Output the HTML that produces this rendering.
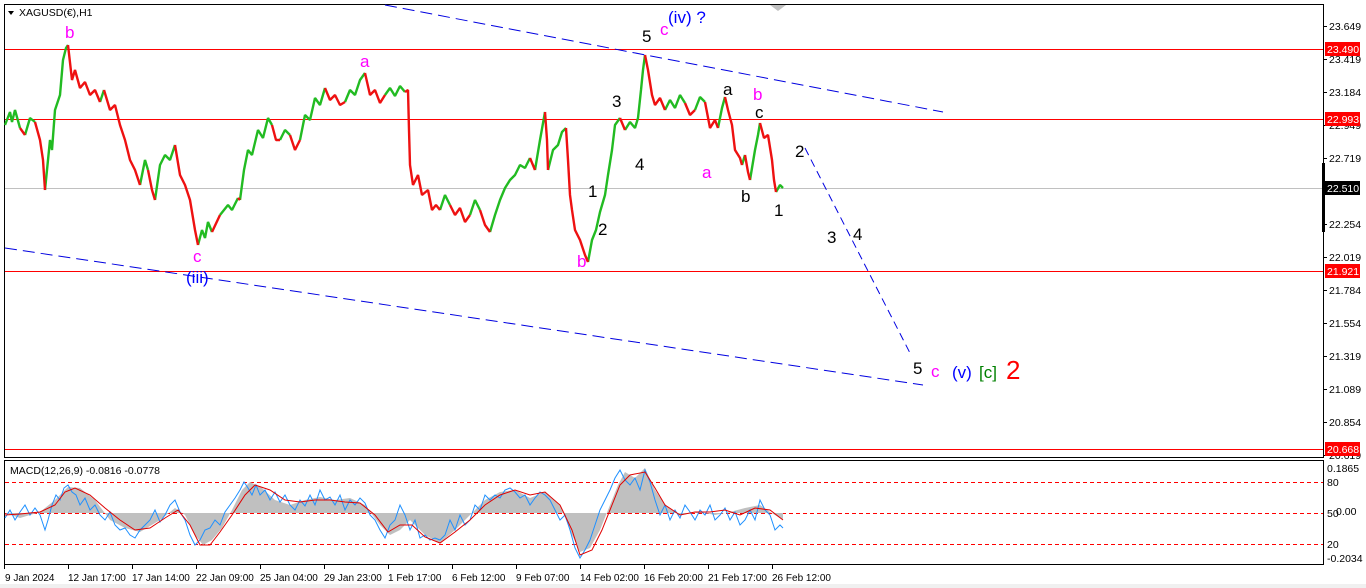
<!DOCTYPE html>
<html><head><meta charset="utf-8"><style>
html,body{margin:0;padding:0;background:#fff;width:1366px;height:588px;overflow:hidden}
svg{display:block}
.ax{font:10.5px "Liberation Sans",sans-serif;fill:#000}
.tx{font:10px "Liberation Sans",sans-serif;fill:#000}
.w{fill:#fff}
.lb{font:17px "Liberation Sans",sans-serif}
</style></head><body>
<svg width="1366" height="588" xmlns="http://www.w3.org/2000/svg">
<rect x="0" y="0" width="1366" height="588" fill="#fff"/>
<rect x="4.5" y="4.5" width="1319" height="453" fill="none" stroke="#000"/>
<rect x="4.5" y="460.5" width="1319" height="104" fill="none" stroke="#000"/>
<rect x="0" y="584" width="1366" height="4" fill="#f0f0f0"/>
<line x1="5" y1="49.5" x2="1323" y2="49.5" stroke="#ff0000"/>
<line x1="5" y1="119.5" x2="1323" y2="119.5" stroke="#ff0000"/>
<line x1="5" y1="188.5" x2="1323" y2="188.5" stroke="#c0c0c0"/>
<line x1="5" y1="271.5" x2="1323" y2="271.5" stroke="#ff0000"/>
<line x1="5" y1="449.5" x2="1323" y2="449.5" stroke="#ff0000"/>
<line x1="5" y1="482.5" x2="1323" y2="482.5" stroke="#ff0000" stroke-dasharray="4,3"/>
<line x1="5" y1="513.5" x2="1323" y2="513.5" stroke="#ff0000" stroke-dasharray="4,3"/>
<line x1="5" y1="544.5" x2="1323" y2="544.5" stroke="#ff0000" stroke-dasharray="4,3"/>

<g fill="none" stroke-width="2.4" stroke-linejoin="bevel">
<path stroke="#22bb22" d="M5,125 L10,112 12,122 15,110 20,128 M25,135 L30,118 35,122 M45,190 L48,160 50,140 52,150 55,110 60,95 63,60 66,48 68,45 M100,102 L104,90 M140,185 L145,160 148,170 M155,200 L160,165 165,155 170,160 175,145 M198,245 L202,230 205,238 208,222 212,232 M220,215 L228,205 232,210 238,198 M240,200 L244,170 248,150 252,155 258,130 263,138 268,118 272,125 M280,140 L285,130 290,135 M300,140 L305,115 310,120 315,98 320,105 325,88 M345,102 L350,90 355,95 360,80 365,73 M385,95 L390,88 395,96 400,86 405,92 M440,210 L445,195 450,205 M470,215 L475,200 480,210 M490,232 L495,215 500,200 505,188 510,180 515,175 520,165 525,168 530,158 M535,170 L540,140 545,112 M548,170 L553,150 558,145 562,132 566,128 M588,262 L592,240 596,230 600,212 605,195 608,175 612,150 615,125 620,118 M625,130 L630,122 635,128 638,118 641,90 643,70 645,55 M665,110 L670,100 675,108 680,95 685,103 M695,110 L700,97 705,102 M718,128 L722,108 725,97 M742,165 L745,155 M750,180 L755,150 758,135 760,123 M776,192 L780,185 783,188"/>
<path stroke="#ee1111" d="M20,128 L25,135 M35,122 L40,140 43,160 45,190 M68,45 L72,80 75,70 80,88 85,82 90,95 95,90 100,102 M104,90 L110,110 115,105 120,125 125,140 130,160 135,170 140,185 M148,170 L152,190 155,200 M175,145 L180,175 185,185 190,200 195,230 198,245 M212,232 L220,215 M238,198 L240,200 M272,125 L276,140 280,140 M290,135 L295,150 300,140 M325,88 L330,100 335,95 340,105 345,102 M365,73 L370,95 375,90 380,103 385,95 M405,92 L408,90 409,130 410,165 413,185 418,175 422,195 428,190 432,210 436,205 440,210 M450,205 L455,215 460,208 465,222 470,215 M480,210 L485,225 490,232 M530,158 L535,170 M545,112 L547,140 548,170 M566,128 L568,160 570,195 572,210 575,230 580,240 585,255 588,262 M620,118 L625,130 M645,55 L648,70 652,95 655,105 660,98 665,110 M685,103 L690,115 695,110 M705,102 L710,128 715,120 718,128 M725,97 L728,110 732,125 735,150 740,158 742,165 M745,155 L748,172 750,180 M760,123 L764,138 768,135 772,160 774,180 776,192"/>
</g>

<polygon fill="#c0c0c0" points="5,513 20,518 40,512 55,500 68,487 80,488 95,500 110,520 125,528 140,532 160,520 175,508 185,515 195,535 203,545 212,540 222,528 232,510 242,490 250,482 262,488 275,500 290,505 305,500 320,497 335,500 350,498 365,505 380,525 390,535 400,530 410,520 425,535 440,543 455,530 470,515 485,500 500,492 515,490 530,498 545,492 560,505 572,535 580,552 590,548 600,530 610,505 618,485 625,472 635,478 645,468 655,490 665,505 680,515 700,512 715,515 730,512 745,508 760,505 770,512 783,520 783,513 5,513"/>
<polyline fill="none" stroke="#1e90ff" stroke-width="1" points="5,518 10,510 15,520 20,512 25,505 30,515 35,508 40,515 45,530 48,520 52,505 56,495 60,500 64,488 68,485 72,492 76,495 80,505 85,498 90,510 95,505 100,515 105,520 110,512 115,525 120,530 125,528 130,535 135,538 140,530 145,525 150,520 155,510 160,522 165,515 170,505 175,500 180,512 185,520 190,535 195,545 200,540 205,530 210,528 215,520 220,525 225,512 230,505 235,498 240,490 244,482 248,488 252,495 256,485 260,495 265,490 270,500 275,492 280,502 285,495 290,505 295,510 300,500 305,506 310,495 315,505 320,490 325,500 330,497 335,505 340,495 345,510 350,500 355,505 360,498 365,503 370,515 375,520 380,530 385,538 390,525 395,520 400,505 405,515 410,530 415,520 420,538 425,535 430,540 435,538 440,540 445,535 450,520 455,530 460,515 465,525 470,520 475,505 480,510 485,495 490,500 495,495 500,498 505,490 510,488 515,492 520,498 525,495 530,505 535,498 540,492 545,495 550,500 555,510 560,520 565,515 570,530 575,548 580,558 585,550 590,540 595,525 600,510 605,500 610,490 615,478 620,470 625,480 630,485 635,478 640,490 645,470 650,482 655,500 660,515 665,505 670,520 675,510 680,518 685,505 690,512 695,520 700,510 705,515 710,505 715,520 720,515 725,508 730,520 735,512 740,525 745,520 750,510 755,520 760,500 765,510 770,515 775,530 780,525 783,528"/>
<polyline fill="none" stroke="#e00000" stroke-width="1" points="5,515 20,514 40,512 55,505 65,492 75,488 90,495 105,508 120,520 135,530 150,528 165,518 178,510 190,525 200,545 210,545 220,532 232,515 245,495 255,485 270,490 285,500 300,502 315,500 330,500 345,502 360,503 375,515 388,532 400,525 412,525 425,537 440,543 455,532 470,520 485,505 500,495 515,490 530,495 545,492 560,505 572,530 580,555 592,550 602,530 612,505 620,485 630,475 645,472 655,488 665,505 680,515 695,512 710,512 725,510 740,515 755,508 770,510 783,520"/>

<line x1="385" y1="5" x2="943" y2="112" stroke="#0000e0" stroke-dasharray="12,6"/>
<line x1="5" y1="248" x2="923" y2="385" stroke="#0000e0" stroke-dasharray="12,6"/>
<line x1="805" y1="148" x2="911" y2="355" stroke="#0000e0" stroke-dasharray="8,5"/>
<polygon points="770,5 786,5 778,11" fill="#c0c0c0"/>
<polygon points="8,11 14,11 11,15" fill="#000"/>
<text x="19" y="16" class="ax">XAGUSD(€),H1</text>
<g class="lb">
<text x="65" y="38" fill="#ff00ff">b</text>
<text x="193" y="262" fill="#ff00ff">c</text>
<text x="186" y="283" fill="#0000ff">(iii)</text>
<text x="360" y="67" fill="#ff00ff">a</text>
<text x="577" y="267" fill="#ff00ff">b</text>
<text x="588" y="197" fill="#000">1</text>
<text x="598" y="235" fill="#000">2</text>
<text x="612" y="107" fill="#000">3</text>
<text x="635" y="170" fill="#000">4</text>
<text x="642" y="42" fill="#000">5</text>
<text x="660" y="35" fill="#ff00ff">c</text>
<text x="668" y="23" fill="#0000ff">(iv) ?</text>
<text x="702" y="178" fill="#ff00ff">a</text>
<text x="723" y="95" fill="#000">a</text>
<text x="753" y="100" fill="#ff00ff">b</text>
<text x="755" y="118" fill="#000">c</text>
<text x="741" y="202" fill="#000">b</text>
<text x="774" y="216" fill="#000">1</text>
<text x="795" y="157" fill="#000">2</text>
<text x="827" y="243" fill="#000">3</text>
<text x="853" y="240" fill="#000">4</text>
<text x="913" y="374" fill="#000">5</text>
<text x="931" y="377" fill="#ff00ff">c</text>
<text x="952" y="378" fill="#0000ff">(v)</text>
<text x="979" y="378" fill="#008000">[c]</text>
<text x="1006" y="379" fill="#ff0000" style="font-size:26px">2</text>
</g>
<g stroke="#000">
<line x1="1323" y1="26.5" x2="1327" y2="26.5"/><line x1="1323" y1="59.5" x2="1327" y2="59.5"/><line x1="1323" y1="92.5" x2="1327" y2="92.5"/><line x1="1323" y1="125.5" x2="1327" y2="125.5"/><line x1="1323" y1="158.5" x2="1327" y2="158.5"/><line x1="1323" y1="224.5" x2="1327" y2="224.5"/><line x1="1323" y1="257.5" x2="1327" y2="257.5"/><line x1="1323" y1="290.5" x2="1327" y2="290.5"/><line x1="1323" y1="323.5" x2="1327" y2="323.5"/><line x1="1323" y1="356.5" x2="1327" y2="356.5"/><line x1="1323" y1="389.5" x2="1327" y2="389.5"/><line x1="1323" y1="422.5" x2="1327" y2="422.5"/><line x1="1323" y1="455.5" x2="1327" y2="455.5"/>
</g>
<g class="ax">
<text x="1329" y="30">23.649</text><text x="1329" y="63">23.419</text><text x="1329" y="96">23.184</text><text x="1329" y="129">22.949</text><text x="1329" y="162">22.719</text><text x="1329" y="228">22.254</text><text x="1329" y="261">22.019</text><text x="1329" y="294">21.784</text><text x="1329" y="327">21.554</text><text x="1329" y="360">21.319</text><text x="1329" y="393">21.089</text><text x="1329" y="426">20.854</text><text x="1329" y="459">20.619</text>
</g>
<rect x="1322" y="163" width="3" height="69" fill="#000"/>
<rect x="1325" y="42" width="35" height="14" fill="#ff0000"/><text x="1327" y="53" class="ax w">23.490</text>
<rect x="1325" y="112" width="35" height="14" fill="#ff0000"/><text x="1327" y="123" class="ax w">22.993</text>
<rect x="1325" y="181" width="35" height="14" fill="#000"/><text x="1327" y="192" class="ax w">22.510</text>
<rect x="1325" y="264" width="35" height="14" fill="#ff0000"/><text x="1327" y="275" class="ax w">21.921</text>
<rect x="1325" y="442" width="35" height="14" fill="#ff0000"/><text x="1327" y="453" class="ax w">20.668</text>
<g class="ax">
<text x="1327" y="472">0.1865</text>
<text x="1327" y="486">80</text>
<text x="1327" y="517">50</text><text x="1336" y="515">0.00</text>
<text x="1327" y="548">20</text>
<text x="1327" y="562">-0.2034</text>
<text x="10" y="474">MACD(12,26,9) -0.0816 -0.0778</text>
</g>
<g stroke="#000">
<line x1="4.5" y1="565" x2="4.5" y2="569"/><line x1="68.5" y1="565" x2="68.5" y2="569"/><line x1="132.5" y1="565" x2="132.5" y2="569"/><line x1="196.5" y1="565" x2="196.5" y2="569"/><line x1="260.5" y1="565" x2="260.5" y2="569"/><line x1="324.5" y1="565" x2="324.5" y2="569"/><line x1="388.5" y1="565" x2="388.5" y2="569"/><line x1="452.5" y1="565" x2="452.5" y2="569"/><line x1="516.5" y1="565" x2="516.5" y2="569"/><line x1="580.5" y1="565" x2="580.5" y2="569"/><line x1="644.5" y1="565" x2="644.5" y2="569"/><line x1="708.5" y1="565" x2="708.5" y2="569"/><line x1="772.5" y1="565" x2="772.5" y2="569"/>
</g>
<g class="tx">
<text x="5" y="581">9 Jan 2024</text><text x="68" y="581">12 Jan 17:00</text><text x="132" y="581">17 Jan 14:00</text><text x="196" y="581">22 Jan 09:00</text><text x="260" y="581">25 Jan 04:00</text><text x="324" y="581">29 Jan 23:00</text><text x="388" y="581">1 Feb 17:00</text><text x="452" y="581">6 Feb 12:00</text><text x="516" y="581">9 Feb 07:00</text><text x="580" y="581">14 Feb 02:00</text><text x="644" y="581">16 Feb 20:00</text><text x="708" y="581">21 Feb 17:00</text><text x="772" y="581">26 Feb 12:00</text>
</g>
</svg>
</body></html>
